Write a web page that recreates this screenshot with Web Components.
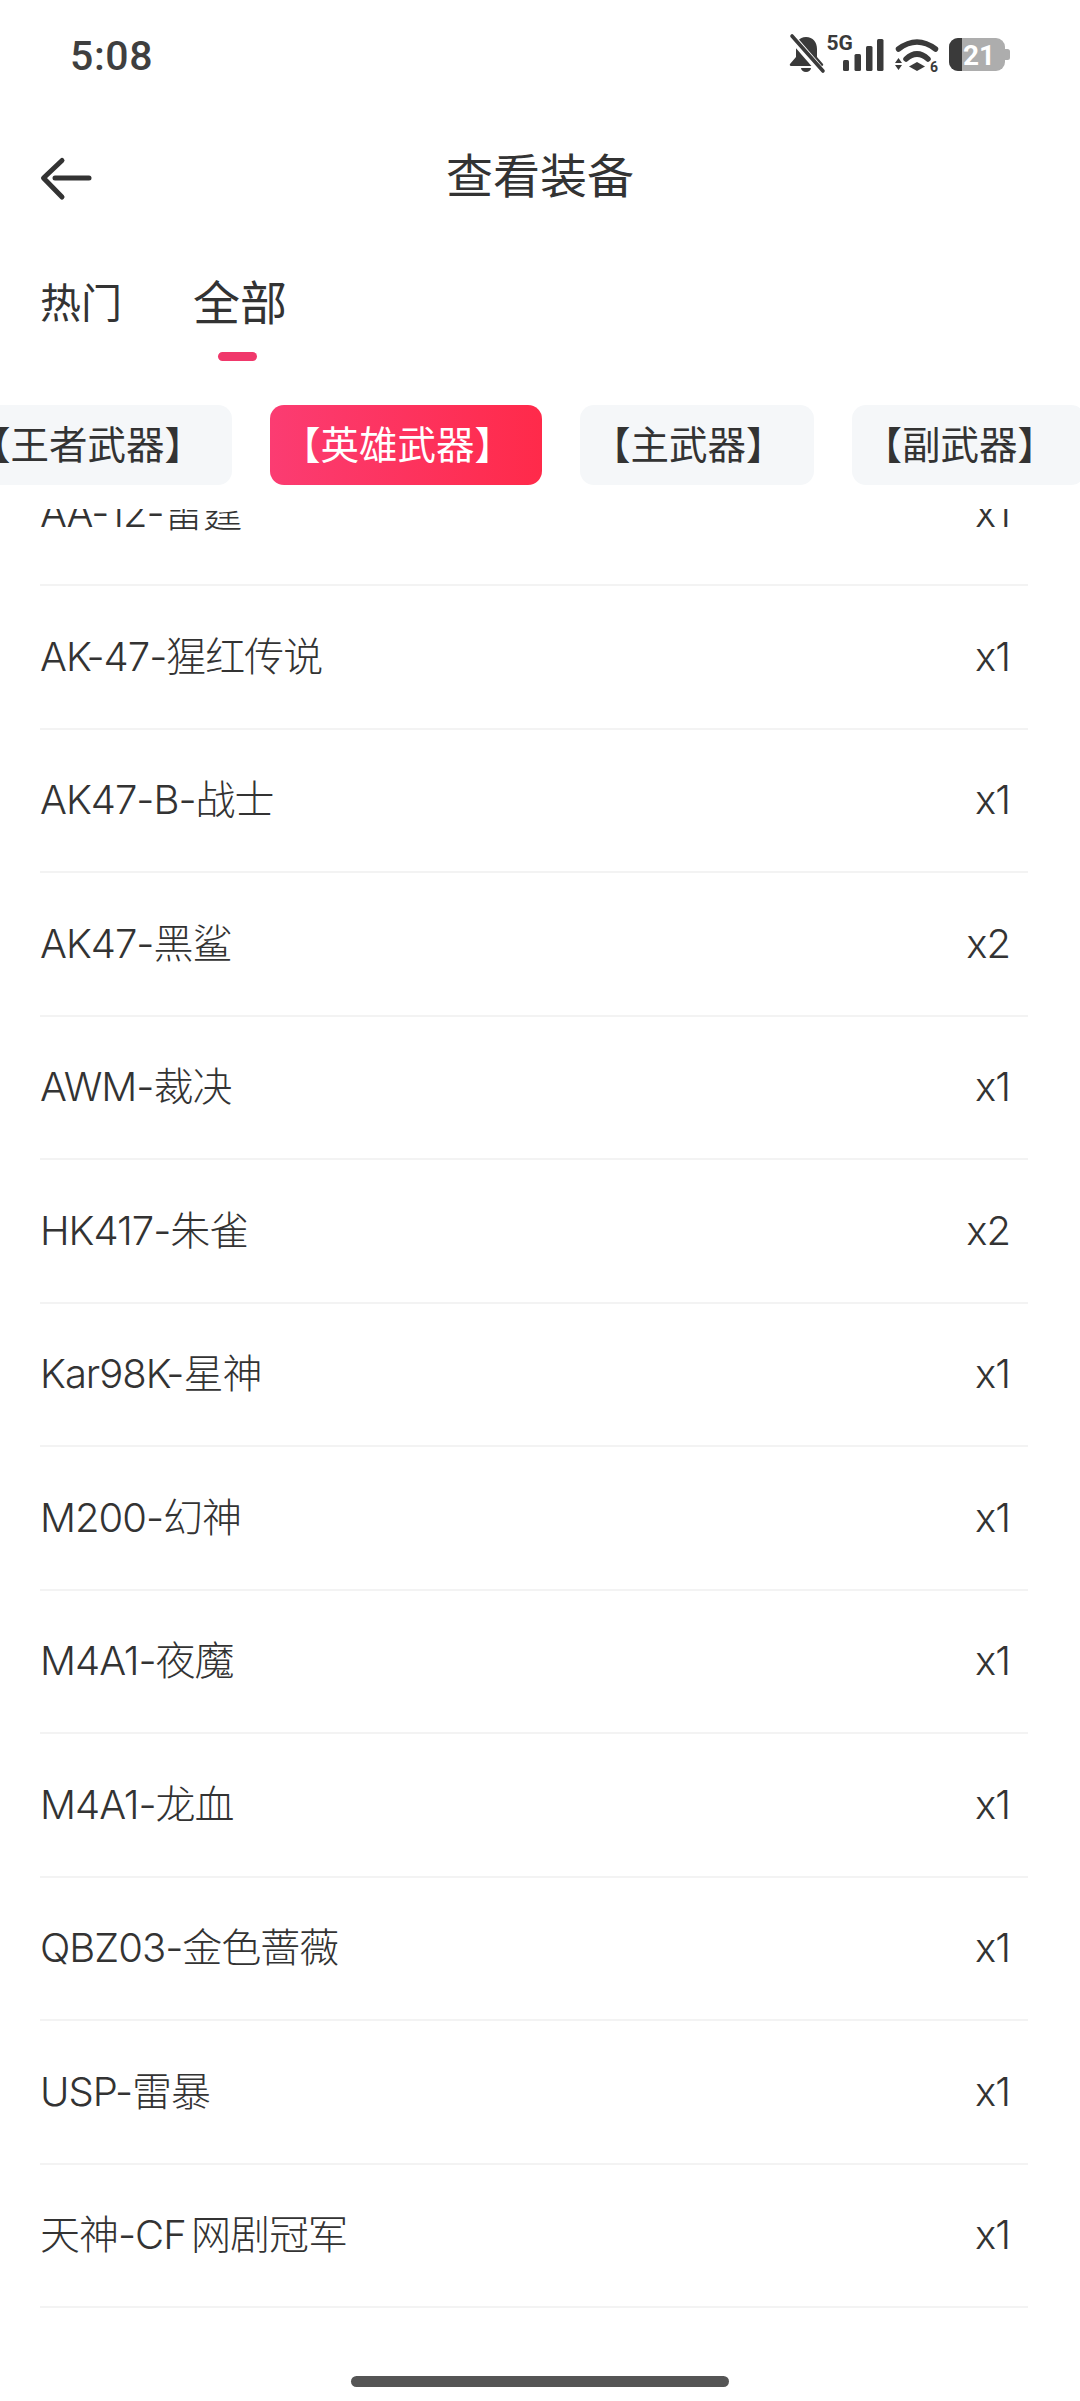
<!DOCTYPE html>
<html lang="zh-CN"><head><meta charset="utf-8"><title>查看装备</title>
<style>
html,body{margin:0;padding:0;background:#fff}
body{width:1080px;height:2401px;overflow:hidden;font-family:"Noto Sans CJK SC","Noto Sans",sans-serif;color:#333}
</style></head><body>
<equip-page>
<status-bar></status-bar>
<nav-bar>查看装备</nav-bar>
<seg-tabs></seg-tabs>
<chip-row>
  <cat-chip>【王者武器】</cat-chip>
  <cat-chip active>【英雄武器】</cat-chip>
  <cat-chip>【主武器】</cat-chip>
  <cat-chip>【副武器】</cat-chip>
</chip-row>
<equip-list>
  <equip-row name="AA-12-雷霆" count="x1"></equip-row>
  <equip-row name="AK-47-猩红传说" count="x1"></equip-row>
  <equip-row name="AK47-B-战士" count="x1"></equip-row>
  <equip-row name="AK47-黑鲨" count="x2"></equip-row>
  <equip-row name="AWM-裁决" count="x1"></equip-row>
  <equip-row name="HK417-朱雀" count="x2"></equip-row>
  <equip-row name="Kar98K-星神" count="x1"></equip-row>
  <equip-row name="M200-幻神" count="x1"></equip-row>
  <equip-row name="M4A1-夜魔" count="x1"></equip-row>
  <equip-row name="M4A1-龙血" count="x1"></equip-row>
  <equip-row name="QBZ03-金色蔷薇" count="x1"></equip-row>
  <equip-row name="USP-雷暴" count="x1"></equip-row>
  <equip-row name="天神-CF 网剧冠军" count="x1"></equip-row>
</equip-list>
<home-bar></home-bar>
</equip-page>
<script>
const def=(tag,css,html,init)=>customElements.define(tag,class extends HTMLElement{
  constructor(){super();this.attachShadow({mode:'open'}).innerHTML=`<style>${css}</style>${html}`;}
  connectedCallback(){init&&init(this);}
});
const FONT='"Noto Sans CJK SC","Noto Sans",sans-serif';
def('equip-page',`:host{display:flex;flex-direction:column;width:1080px;height:2401px;overflow:hidden;background:#fff}`,`<slot></slot>`);
def('status-bar',`:host{display:flex;align-items:flex-start;justify-content:space-between;height:115px;box-sizing:border-box;padding:26px 66px 0 70px}
.t{font:500 41px/50px Roboto,sans-serif;color:#3f3f3f;letter-spacing:.6px;margin-top:4.500px}
svg{display:block}`,
`<div class="t">5:08</div>
<svg width="226" height="50" viewBox="0 -8 226 50">
 <g fill="#3a3a3a">
  <path d="M18 3c7 0 11 5 11 12v8l6 7c.6.900 0 2-1 2H3c-1 0-1.600-1.100-1-2l6-7v-8C8 8 11 3 18 3z"/>
  <path d="M13 34h10a5 4 0 0 1-10 0z"/>
 </g>
 <path d="M1 0 L33 37" stroke="#fff" stroke-width="8"/>
 <path d="M4 2 L35 37" stroke="#3a3a3a" stroke-width="3.600" stroke-linecap="round"/>
 <text x="38.500" y="16" font-family="Roboto,sans-serif" font-weight="700" font-size="21" fill="#3a3a3a">5G</text>
 <g fill="#3a3a3a">
  <rect x="55" y="26" width="6" height="11" rx="1.500"/>
  <rect x="66.500" y="20" width="6.500" height="17" rx="1.500"/>
  <rect x="78" y="12" width="6.500" height="25" rx="1.500"/>
  <rect x="89" y="5" width="6.500" height="32" rx="1.500"/>
  <path d="M129 28l8 4.500-8 4.500-8-4.500z"/>
  <path d="M110.500 24l3.500 5h-7zM110.500 36l3.500-5h-7z"/>
 </g>
 <g fill="none" stroke="#3a3a3a" stroke-width="5.500" stroke-linecap="round">
  <path d="M110.500 15Q129 1 147.500 15"/>
  <path d="M118 25Q129 15 140 25"/>
 </g>
 <text x="142" y="38" font-family="Roboto,sans-serif" font-weight="700" font-size="14" fill="#3a3a3a">6</text>
 <rect x="161" y="4" width="56" height="33" rx="9" fill="#adadad"/>
 <path d="M217 15h2.500a2.500 2.500 0 0 1 2.500 2.500v6a2.500 2.500 0 0 1-2.500 2.500H217z" fill="#adadad"/>
 <path d="M170 4h4v33h-4a9 9 0 0 1-9-9V13a9 9 0 0 1 9-9z" fill="#3a3a3a"/>
 <text x="175" y="31" font-family="Roboto,sans-serif" font-weight="700" font-size="28" fill="#fff">21</text>
</svg>`);
def('nav-bar',`:host{display:flex;align-items:center;justify-content:center;position:relative;height:116px;font:400 47px/60px ${FONT};color:#333}
svg{position:absolute;left:38px;top:40px}`,
`<svg width="56" height="48" viewBox="0 0 56 48" fill="none" stroke="#333" stroke-width="5" stroke-linecap="round" stroke-linejoin="round"><path d="M24 5.500 L5.500 23 L24 42"/><path d="M17 23 H51"/></svg><slot></slot>`);
def('seg-tabs',`:host{display:flex;align-items:flex-start;height:174px;box-sizing:border-box;padding:0 0 0 40px;font-family:${FONT};color:#333}
.a{font-size:41px;line-height:54px;width:153px;margin-top:42px;font-weight:400}
.b{position:relative;font-size:47px;line-height:62px;font-weight:400;width:94px;margin-top:38px}
.b i{position:absolute;left:25px;top:83px;width:39px;height:9px;border-radius:5px;background:#f0386b}`,
`<div class="a">热门</div><div class="b">全部<i></i></div>`);
def('chip-row',`:host{display:flex;gap:38px;height:80px;margin-left:-40px;width:1300px}`,`<slot></slot>`);
def('cat-chip',`:host{display:flex;align-items:center;justify-content:center;flex:none;height:80px;box-sizing:border-box;padding:0 29px 6px 12px;border-radius:14px;background:#f5f7f9;font:400 38.500px/50px ${FONT};color:#333}
:host([active]){background:linear-gradient(90deg,#fb3c72,#ff2a4a);color:#fff}`,`<slot></slot>`);
def('equip-list',`:host{display:block;flex:1;min-height:0;overflow:hidden;margin-top:24px}
.in{margin:-66.500px 52px 0 40px}`,`<div class="in"><slot></slot></div>`);
def('equip-row',`:host{display:flex;align-items:center;justify-content:space-between;height:143.5px;box-sizing:border-box;padding:0 18px 0 0;border-bottom:2px solid #f3f3f3;font:300 40px/50px Inter,${FONT};letter-spacing:-1px;word-spacing:-5px;color:#333}`,
`<span id="n"></span><span id="c"></span>`,el=>{el.shadowRoot.getElementById('n').textContent=el.getAttribute('name');el.shadowRoot.getElementById('c').textContent=el.getAttribute('count');});
def('home-bar',`:host{display:block;flex:none;width:378px;height:11px;margin:0 auto 14px;border-radius:6px;background:#555}`,``);
</script>
</body></html>
